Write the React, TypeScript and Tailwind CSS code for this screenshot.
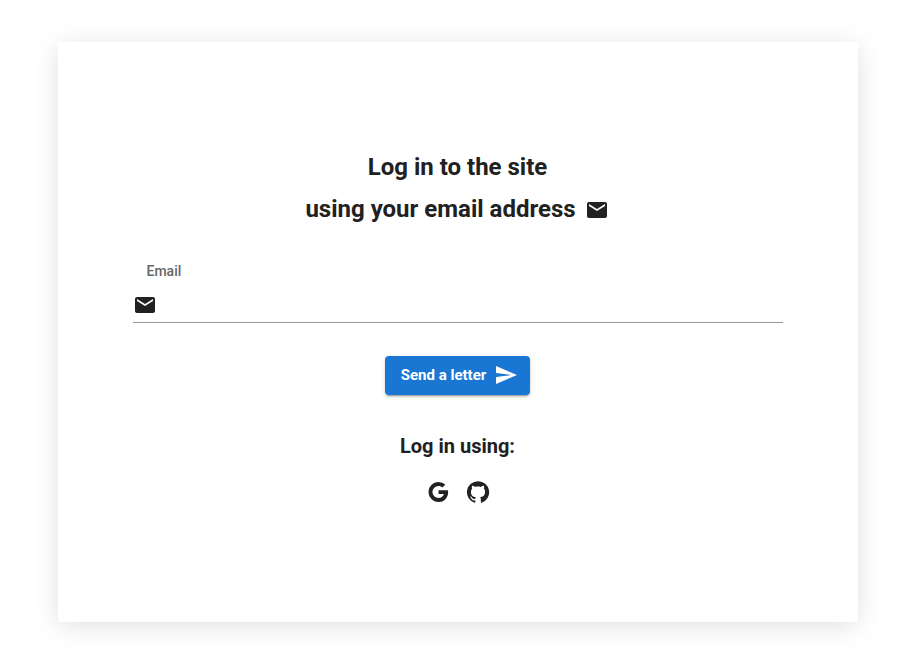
import { MdEmail, MdSend } from "react-icons/md";

function GoogleIcon() {
  return (
    <svg viewBox="0 0 24 24" className="size-6" fill="currentColor" aria-hidden="true">
      <path d="M12.545 10.239v3.821h5.445c-.712 2.315-2.647 3.972-5.445 3.972a6.033 6.033 0 1 1 0-12.064c1.498 0 2.866.549 3.921 1.453l2.814-2.814A9.969 9.969 0 0 0 12.545 2C7.021 2 2.543 6.477 2.543 12s4.478 10 10.002 10c8.396 0 10.249-7.85 9.426-11.748l-9.426-.013z" />
    </svg>
  );
}

function GitHubIcon() {
  return (
    <svg viewBox="0 0 24 24" className="size-6" fill="currentColor" aria-hidden="true">
      <path d="M12 1.27a11 11 0 00-3.48 21.46c.55.09.73-.28.73-.55v-1.84c-3.03.64-3.67-1.46-3.67-1.46-.55-1.29-1.28-1.65-1.28-1.65-.92-.65.1-.65.1-.65 1.1 0 1.73 1.1 1.73 1.1.92 1.65 2.57 1.2 3.21.92a2 2 0 01.64-1.47c-2.47-.27-5.04-1.19-5.04-5.5 0-1.1.46-2.1 1.2-2.84a3.76 3.76 0 010-2.93s.91-.28 3.11 1.1c1.8-.49 3.7-.49 5.5 0 2.1-1.38 3.02-1.1 3.02-1.1a3.76 3.76 0 01.1 2.93c.83.74 1.2 1.74 1.2 2.94 0 4.21-2.57 5.13-5.04 5.4.45.37.82.92.82 2.02v3.03c0 .27.1.64.73.55A11 11 0 0012 1.27" />
    </svg>
  );
}

export default function App() {
  return (
    <main className="flex min-h-screen items-stretch justify-center bg-white pt-[42px] pr-5 pb-[50px] pl-[30px] font-['Roboto',sans-serif] text-[#212121]">
      <section className="flex w-full max-w-[800px] flex-col items-center bg-white px-[75px] py-26 shadow-[0_4px_24px_rgba(0,0,0,0.12)]">
        <h1 className="text-center text-2xl leading-[42px] font-bold">
          Log in to the site
          <span className="flex items-center justify-center gap-[9px] pr-px">
            using your email address
            <MdEmail className="mt-0.5 size-6" aria-hidden="true" />
          </span>
        </h1>

        <form className="flex w-full flex-col items-center" onSubmit={(e) => e.preventDefault()}>
          <div className="mt-[29px] w-full">
            <label htmlFor="email" className="block pl-[14px] text-sm leading-6 font-medium text-[#666]">
              Email
            </label>
            <div className="flex h-10 items-center gap-2 border-b border-[#949494] pt-[5px]">
              <MdEmail className="size-6 shrink-0" aria-hidden="true" />
              <input id="email" type="email" className="h-full w-full min-w-0 bg-transparent outline-none" />
            </div>
          </div>
          <button
            type="submit"
            className="mt-[33px] flex h-[39px] items-center gap-2 rounded bg-[#1976d2] pr-3 pb-px pl-4 text-[15px] font-bold text-white shadow-[0_3px_1px_-2px_rgba(0,0,0,0.2),0_2px_2px_0_rgba(0,0,0,0.14),0_1px_5px_0_rgba(0,0,0,0.12)]"
          >
            Send a letter
            <MdSend className="size-6" aria-hidden="true" />
          </button>
        </form>

        <h2 className="mt-9 text-xl leading-[30px] font-bold">Log in using:</h2>
        <div className="mt-[19px] flex gap-4">
          <button type="button" aria-label="Google">
            <GoogleIcon />
          </button>
          <button type="button" aria-label="GitHub">
            <GitHubIcon />
          </button>
        </div>
      </section>
    </main>
  );
}
